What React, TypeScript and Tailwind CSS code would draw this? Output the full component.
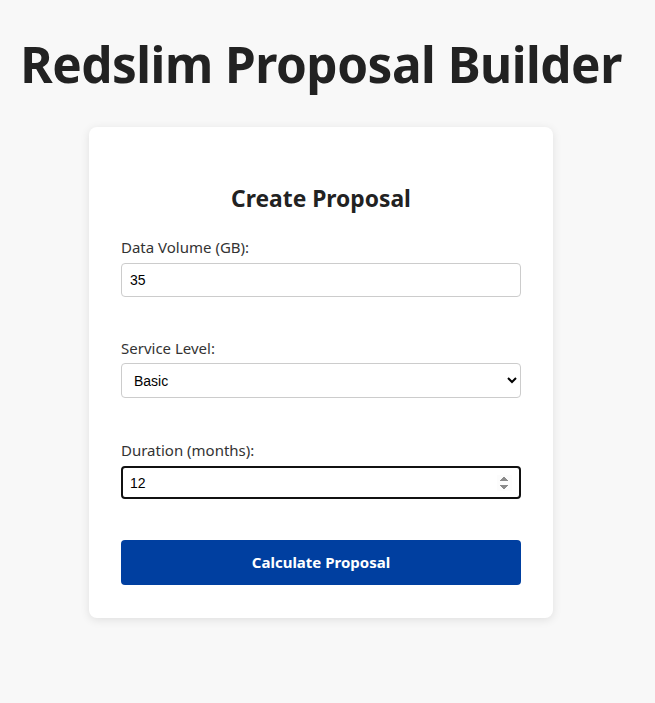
import React from "react";

const App = () => {
    return (
        <div className="min-h-screen w-full bg-[#f8f8f8] font-['Noto_Sans',sans-serif] text-[#222] flex flex-col items-center pt-[26px] pr-[13px]">
            <h1 className="text-[49.5px] font-bold leading-[76px] tracking-[-0.5px]">Redslim Proposal Builder</h1>

            <div className="mt-[25px] w-[464px] bg-white rounded-lg shadow-[0_2px_10px_rgba(0,0,0,0.1)] px-8 pt-[56px] pb-[33px]">
                <h2 className="text-center text-[22.8px] font-bold leading-[32px] mb-[22px]">Create Proposal</h2>

                <form className="flex flex-col" onSubmit={(e) => e.preventDefault()}>
                    <label className="text-[15px] text-[#333] leading-[20px] mb-[6px]">Data Volume (GB):</label>
                    <input
                        type="number"
                        defaultValue={35}
                        className="h-[34px] border border-[#ccc] rounded px-2 text-[14px] font-['Liberation_Sans',sans-serif] text-black outline-none mb-[41px]"
                    />

                    <label className="text-[15px] text-[#333] leading-[20px] mb-[5px]">Service Level:</label>
                    <select className="h-[35px] border border-[#ccc] rounded px-2 text-[14px] font-['Liberation_Sans',sans-serif] text-black outline-none bg-white mb-[42px]">
                        <option>Basic</option>
                        <option>Standard</option>
                        <option>Premium</option>
                    </select>

                    <label className="text-[15px] text-[#333] leading-[20px] mb-[6px]">Duration (months):</label>
                    <input
                        type="number"
                        defaultValue={12}
                        autoFocus
                        className="h-[33px] border-2 border-[#111] rounded px-[7px] text-[14px] font-['Liberation_Sans',sans-serif] text-black outline-none mb-[41px]"
                    />

                    <button
                        type="submit"
                        className="h-[45px] w-full bg-[#003fa0] text-white rounded text-[15px] font-bold"
                    >
                        Calculate Proposal
                    </button>
                </form>
            </div>
        </div>
    );
};

export default App;
